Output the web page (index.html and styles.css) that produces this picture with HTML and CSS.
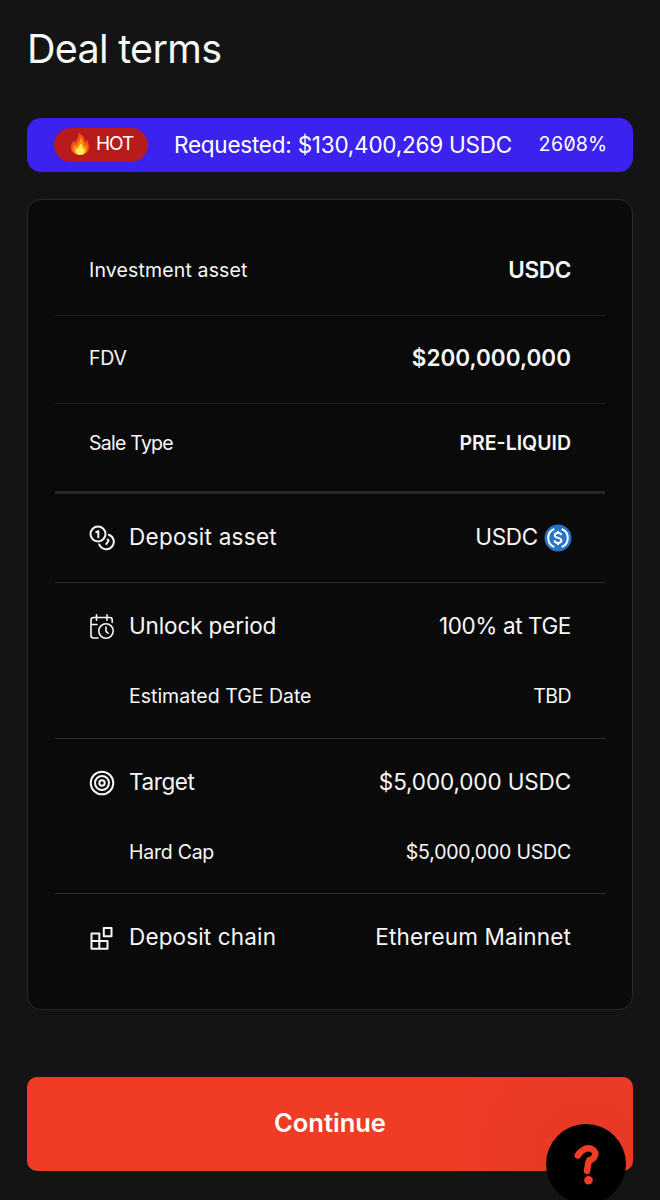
FILE: index.html
```html
<!DOCTYPE html>
<html lang="en">
<head>
<meta charset="utf-8">
<title>Deal terms</title>
<link rel="stylesheet" href="styles.css">
</head>
<body>
<main class="page">
  <h1 class="title">Deal terms</h1>

  <div class="banner">
    <span class="hot">
      <svg class="flame" viewBox="0 0 20 24">
        <path fill="#f4511e" d="M8.500 1c.8 3-.3 4.700-1.700 6.600C5.900 8.900 5.300 10 5.200 11.300 4.500 10.500 4.200 9.500 4.200 8.300 2 10.500 1 13 1 15.500 1 20 4.500 23 10 23s9-3.200 9-7.800c0-3-1.300-4.600-1.500-7.400-.9.800-1.400 1.800-1.500 3-.9-1-1.300-2.300-1.700-4C13.700 4.500 11.500 2 8.500 1z"/>
        <path fill="#ff9800" d="M10 5.500c.6 3-1.500 4.600-2.500 6.500-.5 1-.6 1.700-.5 2.600-1-.4-1.700-1-2-2-1.200 1.300-1.800 2.600-1.800 4.200C3.200 20.500 6 23 10 23s7-2.500 7-6.200c0-1.700-.5-2.800-1-4-.5.900-1 1.400-1.900 1.800C14.300 11 13 7.500 10 5.500z"/>
        <path fill="#ffe95c" d="M10.300 11.500c.2 2-1 2.900-2 4-.4.500-.6 1-.6 1.500-.7-.1-1.100-.5-1.400-1-.6.900-.8 1.700-.8 2.500C5.500 21.300 7.500 23 10.200 23s4.500-1.700 4.500-4.200c0-1.100-.2-1.900-.6-2.700-.4.500-.8.700-1.400.8.200-2.200-.7-4.200-2.400-5.400z"/>
      </svg>
      <span class="hot-text">HOT</span>
    </span>
    <span class="requested">Requested: $130,400,269 USDC</span>
    <span class="percent">2608%</span>
  </div>

  <section class="card">
    <div class="row">
      <span class="label small loose">Investment asset</span>
      <span class="value strong v-usdc">USDC</span>
    </div>
    <div class="row">
      <span class="label small tight">FDV</span>
      <span class="value strong">$200,000,000</span>
    </div>
    <div class="row sale">
      <span class="label small sale-label">Sale Type</span>
      <span class="value type">PRE-LIQUID</span>
    </div>
    <div class="row lined">
      <svg class="icon" viewBox="0 0 26 26">
        <circle cx="9" cy="9" r="7.500"/>
        <path d="M7.300 7.200l2-1.200v6.200M19.800 9.700a7.500 7.500 0 1 1-9.500 9.800M18.700 14.500l.9 1.200-2.300 3.300"/>
      </svg>
      <span class="label wide">Deposit asset</span>
      <span class="value token tight">USDC
        <svg class="usdc" viewBox="0 0 28 28">
          <circle class="coin" cx="14" cy="14" r="13.500"/>
          <path d="M10.300 5a9.700 9.700 0 0 0 0 18M17.700 5a9.700 9.700 0 0 1 0 18M17.300 11.200c-.2-1.600-1.500-2.200-3.300-2.200-2 0-3.200.9-3.200 2.300 0 3.500 6.600 1.700 6.600 5.200 0 1.500-1.300 2.400-3.400 2.400-2 0-3.300-.8-3.500-2.500M14 7v2M14 19v2"/>
        </svg>
      </span>
    </div>
    <div class="group lined">
      <div class="row">
        <svg class="icon thin" viewBox="0 0 26 26">
          <path d="M23.200 8.500V6a2.500 2.500 0 0 0-2.500-2.500H4.500A2.500 2.500 0 0 0 2 6v15.500A2.500 2.500 0 0 0 4.500 24H9M7.500.8v5.500M18 .8v5.500M2 10.500h6"/>
          <circle cx="17" cy="17" r="7.200"/>
          <path d="M17 13v4.300l2 1.900"/>
        </svg>
        <span class="label snug">Unlock period</span>
        <span class="value unlock">100% at TGE</span>
      </div>
      <div class="row sub">
        <span class="label small">Estimated TGE Date</span>
        <span class="value small tighter">TBD</span>
      </div>
    </div>
    <div class="group short lined">
      <div class="row">
        <svg class="icon" viewBox="0 0 26 26">
          <circle cx="13" cy="13" r="11.300"/>
          <circle cx="13" cy="13" r="7"/>
          <circle cx="13" cy="13" r="2.700"/>
        </svg>
        <span class="label unlock">Target</span>
        <span class="value snug">$5,000,000 USDC</span>
      </div>
      <div class="row sub">
        <span class="label small tight">Hard Cap</span>
        <span class="value small cap">$5,000,000 USDC</span>
      </div>
    </div>
    <div class="row">
      <svg class="icon" viewBox="0 0 26 26">
        <path d="M2.500 8.500h7.800v15.300H2.500zM2.500 16h16v7.800h-16M14.800 3h7.700v8.300h-7.700z"/>
      </svg>
      <span class="label loose">Deposit chain</span>
      <span class="value loose">Ethereum Mainnet</span>
    </div>
  </section>

  <button class="continue">Continue</button>
</main>
<div class="help">
  <svg class="help-mark" viewBox="0 0 26 42">
    <path d="M3.800 11.500C7 6 13 3 17.500 5c6 3.200 4.500 9.300-2.200 11.300-1.300 2-1.300 5.700-2.300 10.700"/>
    <circle cx="14.500" cy="36.200" r="4.300"/>
  </svg>
</div>
</body>
</html>
```

FILE: styles.css
```css
* { box-sizing: border-box; }
body {
  margin: 0;
  height: 1200px;
  overflow: hidden;
  position: relative;
  background: #141414;
  color: #f7f7f7;
  font-family: Inter, "Liberation Sans", sans-serif;
  font-weight: 400;
}
.page { padding: 24px 27px 0; display: flex; flex-direction: column; }
.title {
  margin: 0 0 44px;
  font-size: 39.5px;
  font-weight: 400;
  line-height: 50px;
  letter-spacing: -0.7px;
}
.banner {
  height: 54px;
  padding: 0 26px 0 27px;
  border-radius: 14px;
  background: #3b22ee;
  display: flex;
  align-items: center;
  color: #fff;
}
.hot {
  width: 94px;
  height: 34px;
  border-radius: 17px;
  background: #b71b1b;
  display: flex;
  align-items: center;
  padding-left: 16px;
  gap: 6px;
}
.flame { width: 20px; height: 24px; margin-bottom: 3px; }
.hot-text { font-size: 19px; line-height: 24px; margin-bottom: 2px; letter-spacing: -1px; }
.requested { margin: 0 0 2px 26px; font-size: 22.5px; letter-spacing: -0.23px; white-space: nowrap; }
.percent {
  margin: 0 0 2px auto;
  font-size: 19.5px;
  letter-spacing: -0.2px;
  font-feature-settings: "zero", "tnum";
}
.card {
  margin-top: 27px;
  height: 811px;
  padding: 28px 27px 0;
  border: 1px solid #292929;
  border-radius: 14px;
  background: #0a0a0a;
}
.row {
  height: 88px;
  padding: 0 34px 4px;
  display: flex;
  align-items: center;
  border-bottom: 1px solid #1d1d1d;
}
.row:last-child { border-bottom: 0; }
.card .sale { height: 90px; padding-bottom: 9px; border-bottom: 3px solid #2b2425; }
.lined { border-bottom: 1px solid #2c2c2c; }
.row.lined { height: 89px; }
.group { height: 156px; }
.short { height: 155px; }
.group .row { height: 88px; padding-bottom: 3px; border: 0; }
.group .sub { height: 52px; padding-left: 74px; }
.icon {
  width: 26px;
  height: 26px;
  margin: 3px 14px 0 0;
  fill: none;
  stroke: #f7f7f7;
  stroke-width: 2;
  stroke-linecap: round;
  stroke-linejoin: round;
}
.thin { stroke-width: 1.6; }
.label { font-size: 22.5px; white-space: nowrap; }
.value { margin-left: auto; font-size: 22.5px; white-space: nowrap; }
.small { font-size: 19.5px; }
.strong { font-weight: 600; }
.type { font-size: 19.5px; font-weight: 600; }
.wide { letter-spacing: 0.26px; }
.loose { letter-spacing: 0.15px; }
.snug { letter-spacing: -0.13px; }
.tight { letter-spacing: -0.25px; }
.cap { letter-spacing: -0.2px; }
.unlock { letter-spacing: -0.4px; }
.tighter { letter-spacing: -0.55px; }
.sale-label { letter-spacing: -0.75px; }
.v-usdc { letter-spacing: -0.3px; }
.token { display: flex; align-items: center; gap: 6px; }
.usdc { width: 28px; height: 28px; fill: none; stroke: #fff; stroke-width: 2; margin: 3px -1px 0 0; }
.coin { fill: #2775c4; stroke: none; }
.continue {
  margin-top: 67px;
  height: 94px;
  padding: 0 0 3px;
  border: 0;
  border-radius: 10px;
  background: radial-gradient(circle at 560px 76px, #e53825 0, #ea3a25 70px, #f03b25 140px);
  color: #fff;
  font: 600 25.5px Inter, "Liberation Sans", sans-serif;
}
.help {
  position: absolute;
  left: 546px;
  top: 1124px;
  width: 80px;
  height: 80px;
  border-radius: 50%;
  background: #000;
  display: flex;
  justify-content: center;
  padding: 20px 0 0 1px;
}
.help-mark { width: 26px; height: 42px; fill: none; stroke: #f03b25; stroke-width: 6.5; stroke-linecap: round; }
.help-mark circle { fill: #f03b25; stroke: none; }
```
